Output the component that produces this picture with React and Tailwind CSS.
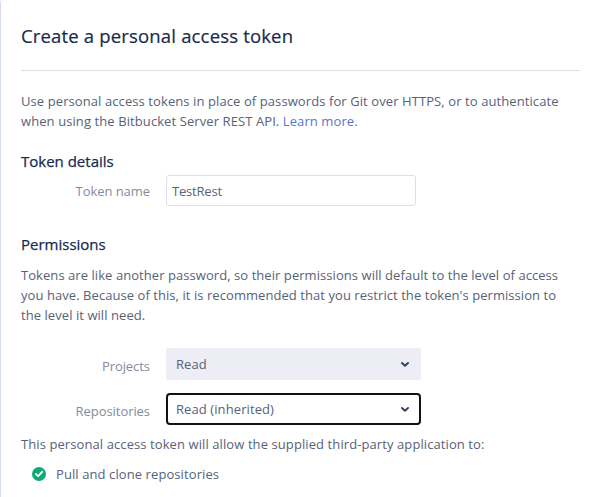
function Chevron() {
  return (
    <svg width="10" height="6" viewBox="0 0 10 6" fill="none" stroke="#344563" strokeWidth="2" strokeLinecap="round" strokeLinejoin="round">
      <path d="M2 2 5 4.7 8 2" />
    </svg>
  );
}

function Check() {
  return (
    <svg width="14" height="14" viewBox="0 0 14 14" fill="none">
      <circle cx="7" cy="7" r="7" fill="#0caa75" />
      <path d="M4 7.1 6.1 9.1 10.2 4.8" stroke="#fff" strokeWidth="1.9" strokeLinecap="round" strokeLinejoin="round" />
    </svg>
  );
}

function Label({ children }) {
  return <span className="block w-[129px] shrink-0 text-right tracking-[-0.06px] text-[#858b9f]">{children}</span>;
}

function SectionTitle({ children }) {
  return <h2 className="text-[15px] tracking-normal text-[#172b4d] [-webkit-text-stroke:0.25px_#172b4d]">{children}</h2>;
}

export default function App() {
  return (
    <main className="h-[497px] w-[600px] overflow-hidden rounded-tl-[3px] border-l border-[#d5dcec] bg-white pl-5 pr-5 font-['Open_Sans','Noto_Sans',sans-serif] text-[13px] leading-5 tracking-[0.09px] text-[#586279] whitespace-nowrap">
      <h1 className="h-[71px] border-b border-[#dfdfe7] pt-[23px] text-[18.5px] leading-[26px] tracking-[0.17px] text-[#172b4d] [-webkit-text-stroke:0.2px_#172b4d]">Create a personal access token</h1>
      <div className="pt-5">
        <p>Use personal access tokens in place of passwords for Git over HTTPS, or to authenticate</p>
        <p>when using the Bitbucket Server REST API. <a className="text-[#5a72cf]">Learn more.</a></p>
      </div>
      <div className="mt-5">
        <SectionTitle>Token details</SectionTitle>
      </div>
      <div className="mt-1 flex h-[31px] items-center gap-4">
        <Label>Token name</Label>
        <div className="flex h-[31px] w-[250px] items-center rounded-[3px] border border-[#dddeec] pl-[5px] tracking-[-0.2px]">TestRest</div>
      </div>
      <div className="mt-7">
        <SectionTitle>Permissions</SectionTitle>
      </div>
      <div className="mt-[11px] tracking-[0.06px]">
        <p>Tokens are like another password, so their permissions will default to the level of access</p>
        <p>you have. Because of this, it is recommended that you restrict the token's permission to</p>
        <p>the level it will need.</p>
      </div>
      <div className="mt-[23px] flex h-8 items-center gap-4">
        <div className="pt-1"><Label>Projects</Label></div>
        <div className="flex h-8 w-[255px] items-center justify-between rounded-[3px] bg-[#ecedf5] pr-[11px] pl-[10px]">Read<Chevron /></div>
      </div>
      <div className="mt-[13px] flex h-8 items-center gap-4">
        <div className="pt-1"><Label>Repositories</Label></div>
        <div className="flex h-8 w-[255px] items-center justify-between rounded-[4px] border-2 border-[#10121a] pr-[9px] pl-2">Read (inherited)<Chevron /></div>
      </div>
      <p className="mt-[9px]">This personal access token will allow the supplied third-party application to:</p>
      <div className="mt-[10px] ml-[11px] flex items-center gap-[10px]"><Check />Pull and clone repositories</div>
    </main>
  );
}
